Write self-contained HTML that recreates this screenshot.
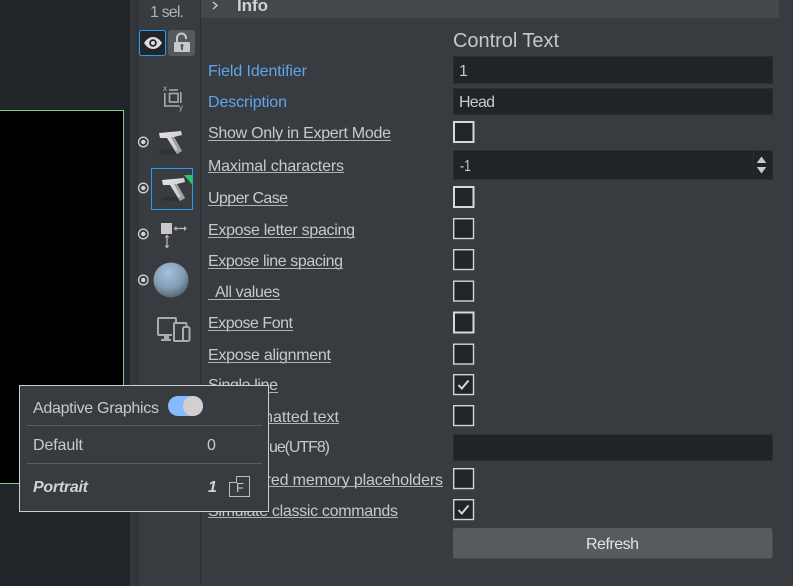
<!DOCTYPE html>
<html><head><meta charset="utf-8"><style>
html,body{margin:0;padding:0;width:793px;height:586px;overflow:hidden;background:#383b40}
svg{display:block}
text{font-family:"Liberation Sans",sans-serif;font-size:16px;fill:#c6cacd}
.b{fill:#62a5e8}
.u{fill:#aeb1b4}
.cb{fill:#212429;stroke:#d4d4d4;stroke-width:1.4}
.cb2{fill:#212429;stroke:#d8d8d8;stroke-width:2}
.ck{fill:none;stroke:#d6d6d6;stroke-width:2}
.in{fill:#202327;stroke:#2b2e32;stroke-width:1}
</style></head><body>
<svg width="793" height="586" viewBox="0 0 793 586" xmlns="http://www.w3.org/2000/svg">
<defs>
<radialGradient id="sp" cx="0.42" cy="0.3" r="0.8"><stop offset="0" stop-color="#a6c1db"/><stop offset="0.55" stop-color="#829cb5"/><stop offset="1" stop-color="#4c5456"/></radialGradient>
<linearGradient id="tg" x1="0" y1="0" x2="1" y2="1"><stop offset="0" stop-color="#e4e4e4"/><stop offset="1" stop-color="#c4c4c4"/></linearGradient>
</defs>
<rect width="793" height="586" fill="#383b40"/>
<rect x="0" y="0" width="130" height="586" fill="#212428"/>
<rect x="130" y="0" width="7" height="586" fill="#34373b"/>
<rect x="137" y="0" width="1" height="586" fill="#2a2d30"/>
<rect x="200" y="0" width="1" height="586" fill="#2c2f33"/>
<rect x="0" y="110" width="124" height="374" fill="#000"/>
<rect x="123" y="110" width="1" height="374" fill="#7fcf7f"/>
<rect x="0" y="110" width="124" height="1" fill="#7fcf7f"/>
<rect x="0" y="483" width="124" height="1" fill="#7fcf7f"/>

<rect x="201" y="0" width="578" height="18" fill="#44474b"/>
<path d="M213 2l4 3.500-4 3.500" fill="none" stroke="#d0d0d0" stroke-width="1.300"/>
<text x="237" y="11" textLength="31" style="font-weight:bold;font-size:17px;fill:#d0d3d6">Info</text>
<text x="150" y="17" textLength="34" style="fill:#aeb4bb">1 sel.</text>

<!-- eye / lock -->
<rect x="139.500" y="30.500" width="26" height="25" rx="2" fill="#212428" stroke="#2a9bf0"/>
<path d="M144 43c3-4.500 6-6 9-6s6 1.500 9 6c-3 4.500-6 6-9 6s-6-1.500-9-6z" fill="#dcdcdc"/>
<circle cx="153" cy="43" r="3.800" fill="#212428"/><circle cx="153" cy="43" r="2" fill="#dcdcdc"/>
<rect x="168" y="30" width="27" height="26" rx="3" fill="#56595c"/>
<rect x="174" y="42" width="16" height="10" rx="1" fill="#c8c8c8"/>
<path d="M177 42v-4a4.500 4.500 0 0 1 9 0v1" fill="none" stroke="#c8c8c8" stroke-width="2"/>
<rect x="181" y="45" width="2" height="5" fill="#56595c"/><circle cx="182" cy="45.500" r="1.500" fill="#56595c"/>

<!-- transform -->
<g fill="none" stroke="#a8aaac" stroke-width="1.600">
<path d="M169 90h9M164.800 93v13h14.200"/>
<rect x="169.500" y="93.500" width="8.500" height="8.500"/>
<path d="M180.800 92v11"/>
</g>
<text x="163" y="91" style="font-size:8px;fill:#b4b6b8">x</text>
<text x="179" y="110" style="font-size:8px;fill:#b4b6b8">y</text>

<!-- radios -->
<g fill="none" stroke="#cfcfcf" stroke-width="1.300">
<circle cx="143.300" cy="142" r="4.800"/><circle cx="143.300" cy="188" r="4.800"/><circle cx="143.300" cy="234" r="4.800"/><circle cx="143.300" cy="280" r="4.800"/>
</g>
<g fill="#d4d4d4">
<circle cx="143.300" cy="142" r="2.200"/><circle cx="143.300" cy="188" r="2.200"/><circle cx="143.300" cy="234" r="2.200"/><circle cx="143.300" cy="280" r="2.200"/>
</g>

<!-- T 1 -->
<g transform="translate(-3,-47)">
<ellipse cx="172" cy="199" rx="10" ry="2.500" fill="#303336"/>
<path d="M162 180l22-2 1 4-8 2 8 14-5 3-10-16-7 0z" fill="url(#tg)"/>
<path d="M177 184l8 14-5 3-2-3 3-1-7-13z" fill="#a0a0a0"/>
</g>

<!-- T 2 selected -->
<rect x="151.500" y="168.500" width="41" height="41" fill="none" stroke="#2a9bf0"/>
<ellipse cx="172" cy="199" rx="10" ry="2.500" fill="#303336"/>
<path d="M162 180l22-2 1 4-8 2 8 14-5 3-10-16-7 0z" fill="url(#tg)"/>
<path d="M177 184l8 14-5 3-2-3 3-1-7-13z" fill="#a0a0a0"/>
<path d="M184 175h8.500v10z" fill="#2fc36f"/>

<!-- move icon -->
<rect x="161" y="223" width="11" height="11" fill="#c8c8c8"/>
<path d="M175 228.500h10" stroke="#b4b4b4" stroke-width="1.300"/>
<path d="M173.500 228.500l3-2.500v5zM187 228.500l-3-2.500v5z" fill="#b4b4b4"/>
<path d="M167 236.500v10" stroke="#b4b4b4" stroke-width="1.300"/>
<path d="M167 234.500l-2.500 3h5zM167 248.500l-2.500-3h5z" fill="#b4b4b4"/>

<!-- sphere -->
<circle cx="171" cy="280" r="17.500" fill="url(#sp)"/>

<!-- devices -->
<g fill="none" stroke="#a9abad" stroke-width="2">
<path d="M172 335h-13a1 1 0 0 1-1-1v-15a1 1 0 0 1 1-1h16a1 1 0 0 1 1 1v3"/>
<rect x="174" y="323" width="12.500" height="18" rx="1" fill="#383b40"/>
<rect x="183" y="327" width="6.500" height="14" rx="1.500" fill="#383b40"/>
</g>
<path d="M164 336h5v3h2v2h-10v-2h3z" fill="#a9abad"/>

<!-- header -->
<text x="453" y="47" textLength="106" style="font-size:20px;fill:#c4c8cc">Control Text</text>

<!-- labels -->
<text class="b" x="208" y="76" textLength="99">Field Identifier</text>
<text class="b" x="208" y="107" textLength="79">Description</text>
<text x="208" y="138" textLength="183">Show Only in Expert Mode</text><rect class="u" x="208" y="140" width="183" height="1"/>
<text x="208" y="171" textLength="136">Maximal characters</text><rect class="u" x="208" y="172" width="136" height="1"/>
<text x="208" y="203" textLength="80">Upper Case</text><rect class="u" x="208" y="205" width="80" height="1"/>
<text x="208" y="235" textLength="147">Expose letter spacing</text><rect class="u" x="208" y="237" width="147" height="1"/>
<text x="208" y="266" textLength="135">Expose line spacing</text><rect class="u" x="208" y="268" width="135" height="1"/>
<text x="215" y="297" textLength="65">All values</text><rect class="u" x="208" y="299" width="72" height="1"/>
<text x="208" y="328" textLength="85">Expose Font</text><rect class="u" x="208" y="330" width="85" height="1"/>
<text x="208" y="360" textLength="123">Expose alignment</text><rect class="u" x="208" y="362" width="123" height="1"/>
<text x="208" y="390" textLength="70">Single line</text><rect class="u" x="208" y="392" width="70" height="1"/>
<text x="208" y="422" textLength="131">Use formatted text</text><rect class="u" x="208" y="423" width="131" height="1"/>
<text x="269" y="452" textLength="61">ue(UTF8)</text>
<text x="208" y="485" textLength="235">Use shared memory placeholders</text><rect class="u" x="208" y="486" width="235" height="1"/>
<text x="208" y="516" textLength="190">Simulate classic commands</text><rect class="u" x="208" y="517" width="190" height="1"/>

<!-- inputs -->
<rect class="in" x="453.500" y="56.500" width="319" height="27"/>
<text x="459" y="76" textLength="7">1</text>
<rect class="in" x="453.500" y="88.500" width="319" height="26"/>
<text x="459" y="107" textLength="36">Head</text>
<rect class="in" x="453.500" y="150.500" width="319" height="29"/>
<rect x="753" y="151" width="1" height="28" fill="#2b2e32"/>
<text x="460" y="171" textLength="11" lengthAdjust="spacingAndGlyphs">-1</text>
<path d="M761.500 156.500l4.800 6.500h-9.600zM761.500 173.500l4.800-6.500h-9.600z" fill="#c8c8c8"/>
<rect class="in" x="453.500" y="434.500" width="319" height="26"/>

<!-- checkboxes -->
<rect class="cb2" x="454" y="122" width="19.500" height="20"/>
<rect class="cb2" x="454" y="187" width="19.500" height="20"/>
<rect class="cb" x="453.700" y="218.700" width="19.800" height="19.800"/>
<rect class="cb" x="453.700" y="249.700" width="19.800" height="19.800"/>
<rect class="cb" x="453.700" y="281.200" width="19.800" height="19.800"/>
<rect class="cb2" x="454" y="312.500" width="19.500" height="20"/>
<rect class="cb" x="453.700" y="344.200" width="19.800" height="19.800"/>
<rect class="cb" x="453.700" y="374.700" width="19.800" height="19.800"/>
<path class="ck" d="M458.500 385l3.300 3.500 6.700-8"/>
<rect class="cb" x="453.700" y="405.700" width="19.800" height="19.800"/>
<rect class="cb" x="453.700" y="468.700" width="19.800" height="19.800"/>
<rect class="cb" x="453.700" y="499.700" width="19.800" height="19.800"/>
<path class="ck" d="M458.500 510l3.300 3.500 6.700-8"/>

<!-- refresh -->
<rect x="453" y="528" width="319.500" height="30.500" rx="2.500" fill="#585b5e"/>
<text x="586" y="549" textLength="53" style="fill:#e2e4e6">Refresh</text>

<!-- popup -->
<rect x="19.500" y="385.500" width="249" height="126" fill="#383b40" stroke="#cdcdcd"/>
<rect x="27" y="425" width="235" height="1" fill="#595c60"/>
<rect x="27" y="463" width="235" height="1" fill="#595c60"/>
<text x="33" y="413" textLength="126">Adaptive Graphics</text>
<rect x="168" y="396" width="35" height="20" rx="10" fill="#86bcff"/>
<circle cx="193" cy="406" r="10" fill="#d1cfcf"/>
<text x="33" y="450" textLength="50">Default</text>
<text x="207" y="450" textLength="8">0</text>
<text x="33" y="492" textLength="55" style="font-weight:bold;font-style:italic;fill:#d0d3d6">Portrait</text>
<text x="208" y="492" textLength="7" style="font-weight:bold;font-style:italic;fill:#d0d3d6">1</text>
<path d="M236.500 482.500v-6h13v20h-20v-14z" fill="none" stroke="#bdbdbd" stroke-width="1"/>
<text x="236" y="492" textLength="7" style="font-size:13px;fill:#c6cacd">F</text>
</svg>
</body></html>
